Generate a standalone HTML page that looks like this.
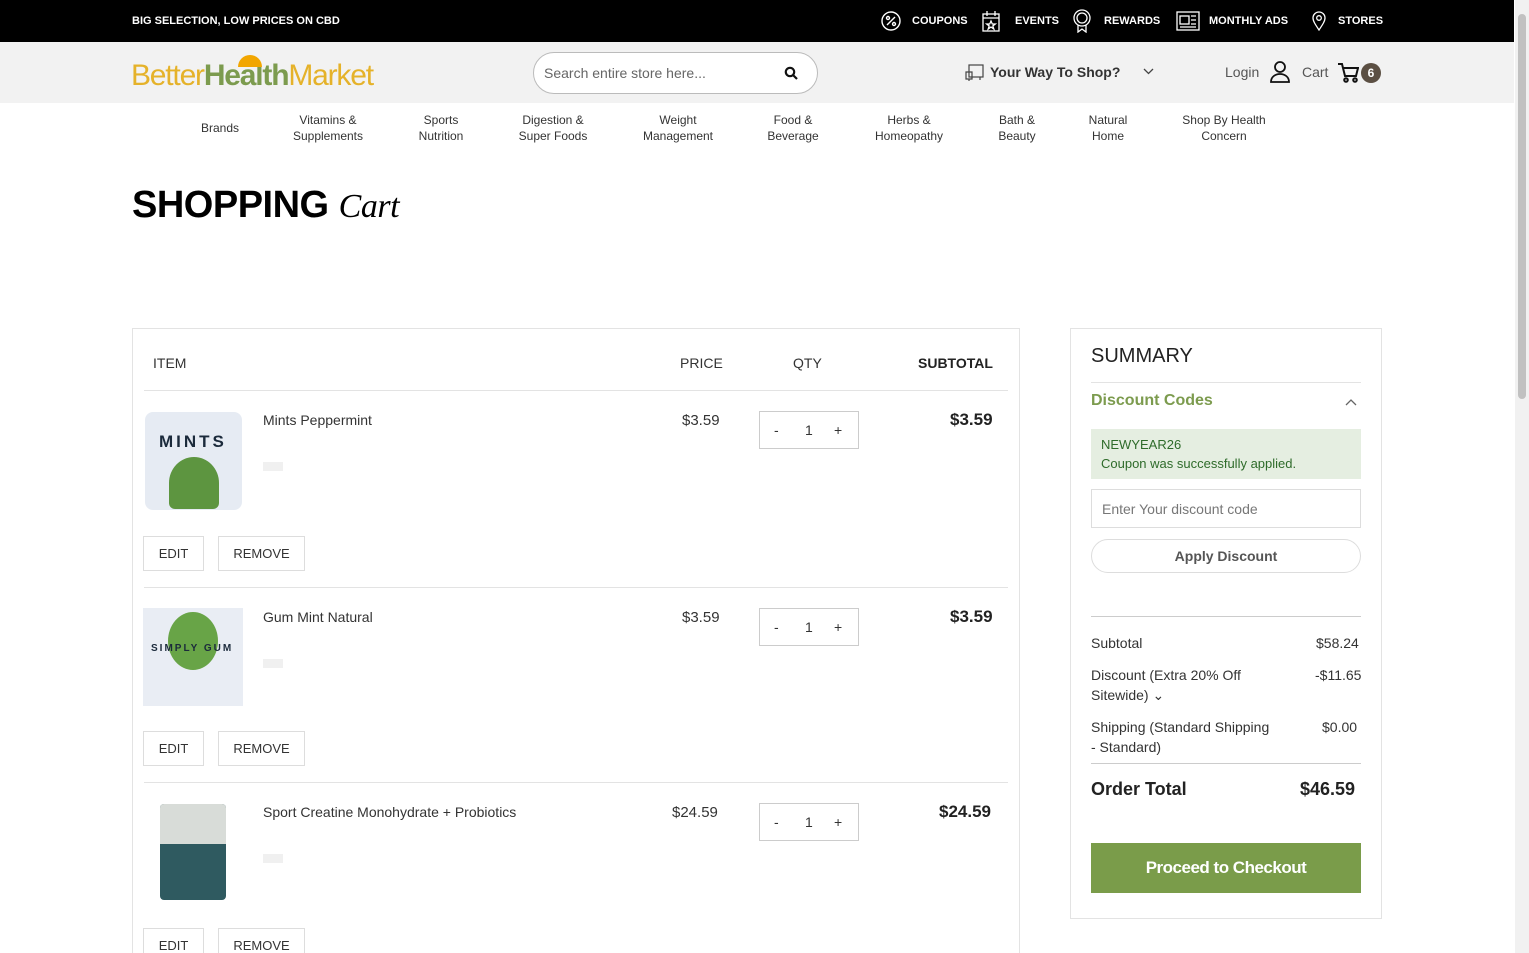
<!DOCTYPE html>
<html style="height:953px;overflow:hidden"><head><meta charset="utf-8"><style>
*{box-sizing:border-box;margin:0;padding:0}
body{width:1529px;height:953px;overflow:hidden;font-family:"Liberation Sans",sans-serif;color:#333;background:#fff;position:relative}
.a{position:absolute}
.top{left:0;top:0;width:1514px;height:42px;background:#000;color:#fff;font-size:11px;font-weight:bold}
.hdr{left:0;top:42px;width:1514px;height:61px;background:#f2f2f2}
.nav div{position:absolute;top:112px;font-size:12px;text-align:center;line-height:16px;color:#333;transform:translateX(-50%);white-space:nowrap}
.box{border:1px solid #e3e3e3}
.btn{position:absolute;border:1px solid #ddd;font-size:13px;height:35px;line-height:33px;text-align:center;color:#333}
.qty{position:absolute;width:100px;height:38px;border:1px solid #ccc;font-size:14px;line-height:36px}
.qty span{position:absolute}
.sb{position:absolute;right:0;width:14px;top:0;height:953px;background:#f1f1f1}
</style></head><body>
<div class="a top">
<div class="a" style="left:132px;top:15px">BIG SELECTION, LOW PRICES ON CBD</div>
<svg class="a" style="left:880px;top:10px" width="22" height="22" viewBox="0 0 22 22" fill="none" stroke="#fff" stroke-width="1.4"><circle cx="11" cy="11" r="9"/><path d="M7 15L15 7"/><circle cx="8" cy="8" r="1.5"/><circle cx="14" cy="14" r="1.5"/></svg>
<div class="a" style="left:912px;top:15px">COUPONS</div>
<svg class="a" style="left:982px;top:10px" width="18" height="22" viewBox="0 0 18 22" fill="none" stroke="#fff" stroke-width="1.3"><rect x="1" y="4" width="16" height="17"/><path d="M1 8h16M5 1v5M13 1v5M9 11l1.3 3h3l-2.5 2 1 3-2.8-2-2.8 2 1-3-2.5-2h3z"/></svg>
<div class="a" style="left:1015px;top:15px">EVENTS</div>
<svg class="a" style="left:1072px;top:9px" width="20" height="24" viewBox="0 0 20 24" fill="none" stroke="#fff" stroke-width="1.3"><circle cx="10" cy="9" r="8"/><circle cx="10" cy="9" r="5"/><path d="M6 16v7l4-3 4 3v-7"/></svg>
<div class="a" style="left:1104px;top:15px">REWARDS</div>
<svg class="a" style="left:1176px;top:11px" width="24" height="20" viewBox="0 0 24 20" fill="none" stroke="#fff" stroke-width="1.3"><rect x="1" y="1" width="22" height="18"/><rect x="4" y="5" width="9" height="8"/><path d="M15 5h5M15 9h5M15 13h5M4 16h16"/></svg>
<div class="a" style="left:1209px;top:15px">MONTHLY ADS</div>
<svg class="a" style="left:1312px;top:11px" width="14" height="20" viewBox="0 0 14 20" fill="none" stroke="#fff" stroke-width="1.3"><path d="M7 19C3 13 1 10 1 7a6 6 0 0112 0c0 3-2 6-6 12z"/><circle cx="7" cy="7" r="2.3"/></svg>
<div class="a" style="left:1338px;top:15px">STORES</div>
</div>
<div class="a hdr">
<div class="a" style="left:131px;top:17px;font-size:30px;letter-spacing:-1.2px"><span style="color:#e5b22a">Better</span><span style="color:#7c9b4e;font-weight:bold">Health</span><span style="color:#e5b22a">Market</span></div>
<div class="a" style="left:238px;top:13px;width:24px;height:12px;background:#f2a600;border-radius:12px 12px 0 0"></div>
<div class="a" style="left:533px;top:10px;width:285px;height:42px;border:1px solid #bbb;border-radius:21px;background:#fff"><span class="a" style="left:10px;top:12px;font-size:14px;color:#666">Search entire store here...</span>
<svg class="a" style="left:250px;top:13px" width="14" height="14" viewBox="0 0 14 14" fill="none" stroke="#111" stroke-width="2.2"><circle cx="6" cy="6" r="4.2"/><path d="M9 9l4 4"/></svg></div>
<svg class="a" style="left:965px;top:22px" width="20" height="18" viewBox="0 0 20 18" fill="none" stroke="#444" stroke-width="1.2"><rect x="4" y="1" width="14" height="12"/><path d="M1 8h6v7H1zM4 15v2M15 13v3"/></svg>
<div class="a" style="left:990px;top:22px;font-size:14px;font-weight:bold;color:#333">Your Way To Shop?</div>
<svg class="a" style="left:1143px;top:26px" width="11" height="7" viewBox="0 0 11 7" fill="none" stroke="#444" stroke-width="1.3"><path d="M1 1l4.5 4.5L10 1"/></svg>
<div class="a" style="left:1225px;top:22px;font-size:14px;color:#555">Login</div>
<svg class="a" style="left:1270px;top:19px" width="20" height="22" viewBox="0 0 20 22" fill="none" stroke="#111" stroke-width="1.8"><circle cx="10" cy="6" r="5"/><path d="M1 21c0-5 4-8 9-8s9 3 9 8z"/></svg>
<div class="a" style="left:1302px;top:22px;font-size:14px;color:#555">Cart</div>
<svg class="a" style="left:1337px;top:20px" width="22" height="22" viewBox="0 0 22 22" fill="none" stroke="#111" stroke-width="2"><path d="M1 2h4l3 12h11l2-8H6"/><circle cx="9" cy="18" r="1.8"/><circle cx="18" cy="18" r="1.8"/></svg>
<div class="a" style="left:1361px;top:21px;width:20px;height:20px;border-radius:10px;background:#5b4f43;color:#fff;font-size:12px;text-align:center;line-height:20px;font-weight:bold">6</div>
</div>
<div class="nav">
<div style="left:220px;top:120px">Brands</div>
<div style="left:328px">Vitamins &amp;<br>Supplements</div>
<div style="left:441px">Sports<br>Nutrition</div>
<div style="left:553px">Digestion &amp;<br>Super Foods</div>
<div style="left:678px">Weight<br>Management</div>
<div style="left:793px">Food &amp;<br>Beverage</div>
<div style="left:909px">Herbs &amp;<br>Homeopathy</div>
<div style="left:1017px">Bath &amp;<br>Beauty</div>
<div style="left:1108px">Natural<br>Home</div>
<div style="left:1224px">Shop By Health<br>Concern</div>
</div>
<div class="a" style="left:132px;top:184px;font-size:38px;font-weight:900;color:#000;letter-spacing:-0.5px">SHOPPING <span style="font-family:'Liberation Serif',serif;font-style:italic;font-weight:normal;font-size:34px">Cart</span></div>

<div class="a box" style="left:132px;top:328px;width:888px;height:640px"></div>
<div class="a" style="left:153px;top:355px;font-size:14px">ITEM</div>
<div class="a" style="left:680px;top:355px;font-size:14px">PRICE</div>
<div class="a" style="left:793px;top:355px;font-size:14px">QTY</div>
<div class="a" style="left:918px;top:355px;font-size:14px;font-weight:bold;color:#222">SUBTOTAL</div>
<div class="a" style="left:144px;top:390px;width:864px;height:1px;background:#e3e3e3"></div>

<div class="a" style="left:145px;top:412px;width:97px;height:98px;background:#e6ebf3;border-radius:8px"><div class="a" style="left:14px;top:20px;font-size:17px;font-weight:bold;letter-spacing:3px;color:#1b2a3b">MINTS</div><div class="a" style="left:24px;top:45px;width:50px;height:52px;background:#5d9540;border-radius:50% 50% 6px 6px"></div></div>
<div class="a" style="left:263px;top:412px;font-size:14px">Mints Peppermint</div>
<div class="a" style="left:263px;top:462px;width:20px;height:9px;background:#f0f0f0"></div>
<div class="a" style="left:682px;top:412px;font-size:15px">$3.59</div>
<div class="qty" style="left:759px;top:411px"><span style="left:14px">-</span><span style="left:45px">1</span><span style="left:74px">+</span></div>
<div class="a" style="left:950px;top:410px;font-size:17px;font-weight:bold;color:#222">$3.59</div>
<div class="btn" style="left:143px;top:536px;width:61px">EDIT</div>
<div class="btn" style="left:218px;top:536px;width:87px">REMOVE</div>
<div class="a" style="left:144px;top:587px;width:864px;height:1px;background:#e3e3e3"></div>

<div class="a" style="left:143px;top:608px;width:100px;height:98px;background:#e9edf4"><div class="a" style="left:25px;top:4px;width:50px;height:58px;background:#68a447;border-radius:50%"></div><div class="a" style="left:8px;top:35px;font-size:10px;font-weight:bold;letter-spacing:2px;color:#1b2a3b">SIMPLY GUM</div></div>
<div class="a" style="left:263px;top:609px;font-size:14px">Gum Mint Natural</div>
<div class="a" style="left:263px;top:659px;width:20px;height:9px;background:#f0f0f0"></div>
<div class="a" style="left:682px;top:609px;font-size:15px">$3.59</div>
<div class="qty" style="left:759px;top:608px"><span style="left:14px">-</span><span style="left:45px">1</span><span style="left:74px">+</span></div>
<div class="a" style="left:950px;top:607px;font-size:17px;font-weight:bold;color:#222">$3.59</div>
<div class="btn" style="left:143px;top:731px;width:61px">EDIT</div>
<div class="btn" style="left:218px;top:731px;width:87px">REMOVE</div>
<div class="a" style="left:144px;top:782px;width:864px;height:1px;background:#e3e3e3"></div>

<div class="a" style="left:160px;top:804px;width:66px;height:96px;background:#2f5a60;border-radius:4px"><div class="a" style="left:0;top:0;width:66px;height:40px;background:#d8dcd8;border-radius:4px 4px 0 0"></div></div>
<div class="a" style="left:263px;top:804px;font-size:14px">Sport Creatine Monohydrate + Probiotics</div>
<div class="a" style="left:263px;top:854px;width:20px;height:9px;background:#f0f0f0"></div>
<div class="a" style="left:672px;top:804px;font-size:15px">$24.59</div>
<div class="qty" style="left:759px;top:803px"><span style="left:14px">-</span><span style="left:45px">1</span><span style="left:74px">+</span></div>
<div class="a" style="left:939px;top:802px;font-size:17px;font-weight:bold;color:#222">$24.59</div>
<div class="btn" style="left:143px;top:928px;width:61px">EDIT</div>
<div class="btn" style="left:218px;top:928px;width:87px">REMOVE</div>

<div class="a box" style="left:1070px;top:328px;width:312px;height:591px"></div>
<div class="a" style="left:1091px;top:345px;font-size:20px;color:#222">SUMMARY</div>
<div class="a" style="left:1091px;top:382px;width:270px;height:1px;background:#e3e3e3"></div>
<div class="a" style="left:1091px;top:392px;font-size:16px;font-weight:bold;color:#7c9b4e">Discount Codes</div>
<svg class="a" style="left:1345px;top:398px" width="12" height="8" viewBox="0 0 12 8" fill="none" stroke="#666" stroke-width="1.3"><path d="M1 7l5-5 5 5"/></svg>
<div class="a" style="left:1091px;top:429px;width:270px;height:50px;background:#e5eee1;color:#2e6b2a;font-size:13px;padding:6px 10px;line-height:19px">NEWYEAR26<br>Coupon was successfully applied.</div>
<div class="a" style="left:1091px;top:489px;width:270px;height:39px;border:1px solid #ddd;font-size:14px;color:#777;padding:11px 10px">Enter Your discount code</div>
<div class="a" style="left:1091px;top:539px;width:270px;height:34px;border:1px solid #ddd;border-radius:17px;font-size:14px;font-weight:bold;color:#555;text-align:center;line-height:32px">Apply Discount</div>
<div class="a" style="left:1091px;top:616px;width:270px;height:1px;background:#ccc"></div>
<div class="a" style="left:1091px;top:635px;font-size:14px">Subtotal</div><div class="a" style="left:1316px;top:635px;font-size:14px">$58.24</div>
<div class="a" style="left:1091px;top:665px;font-size:14px;line-height:20px">Discount (Extra 20% Off<br>Sitewide) &#8964;</div><div class="a" style="left:1315px;top:667px;font-size:14px">-$11.65</div>
<div class="a" style="left:1091px;top:717px;font-size:14px;line-height:20px">Shipping (Standard Shipping<br>- Standard)</div><div class="a" style="left:1322px;top:719px;font-size:14px">$0.00</div>
<div class="a" style="left:1091px;top:763px;width:270px;height:1px;background:#ccc"></div>
<div class="a" style="left:1091px;top:779px;font-size:18px;font-weight:bold;color:#222">Order Total</div><div class="a" style="left:1300px;top:779px;font-size:18px;font-weight:bold;color:#222">$46.59</div>
<div class="a" style="left:1091px;top:843px;width:270px;height:50px;background:#7a9c4a;color:#fff;font-size:17px;font-weight:bold;text-align:center;line-height:50px;letter-spacing:-0.5px">Proceed to Checkout</div>
<div class="sb"><div class="a" style="left:3px;top:14px;width:8px;height:385px;background:#c1c1c1;border-radius:4px"></div></div>
</body></html>
